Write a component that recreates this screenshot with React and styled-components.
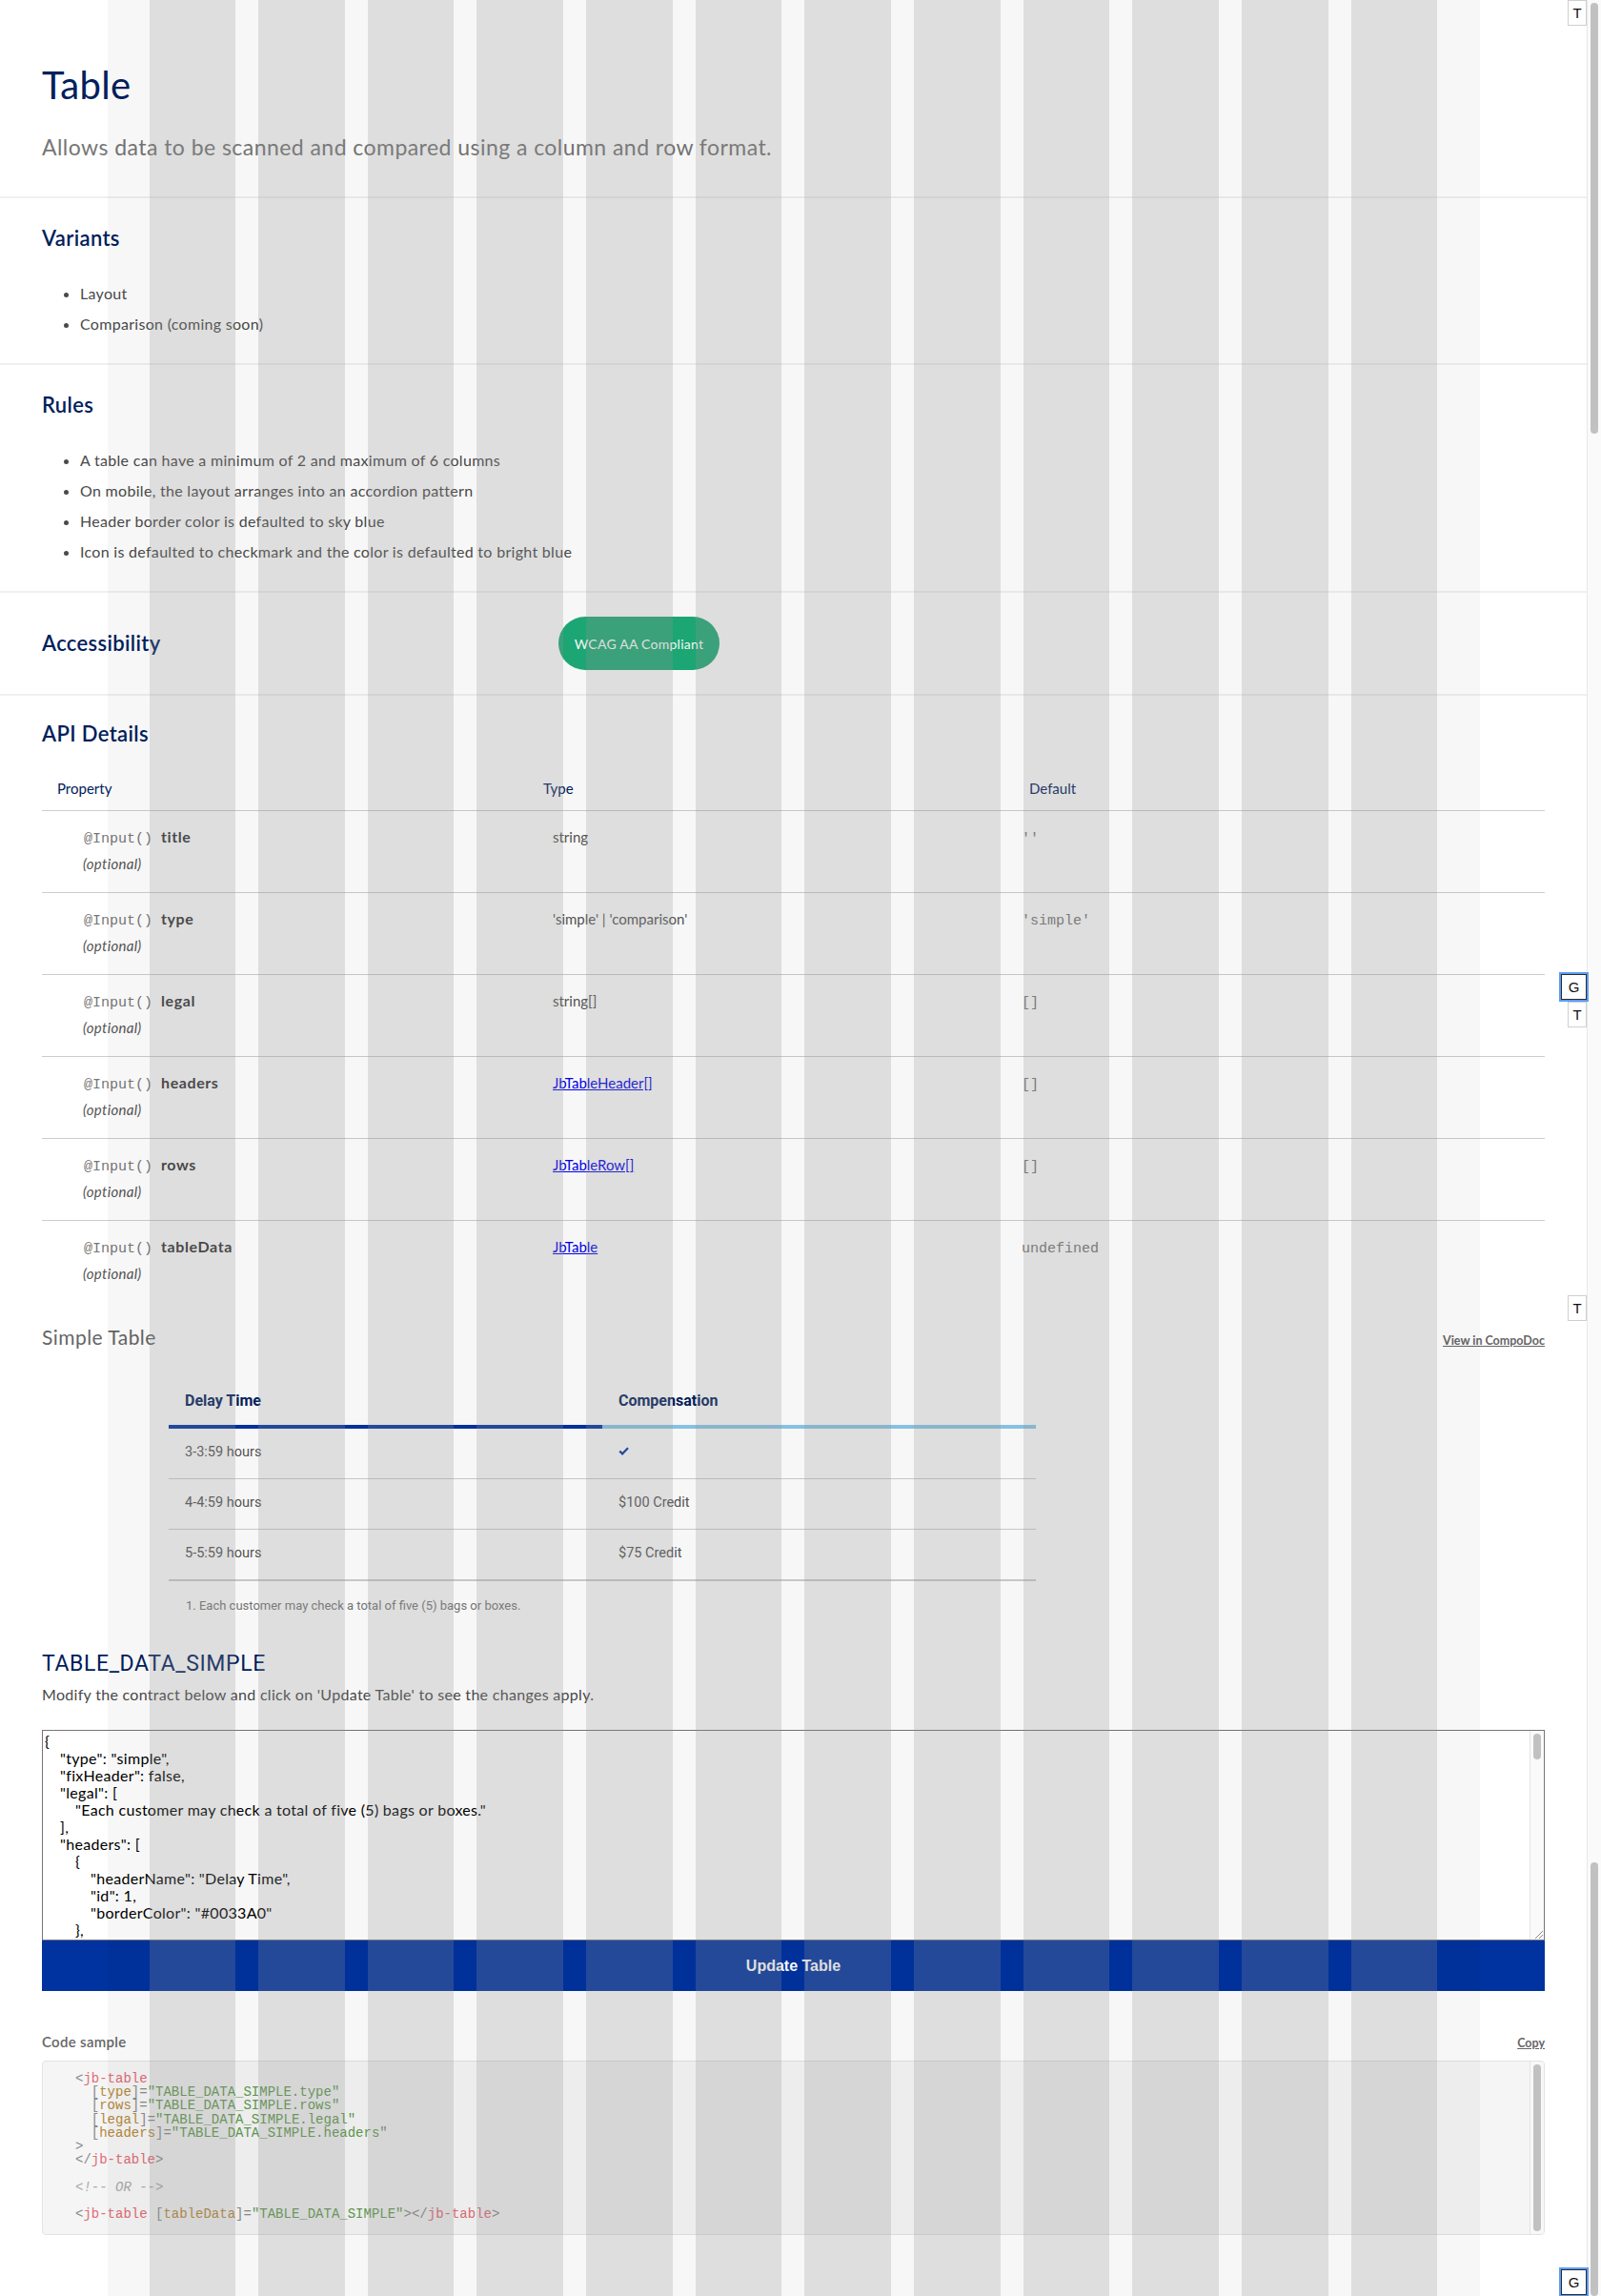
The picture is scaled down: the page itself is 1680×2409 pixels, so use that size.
import React from 'react';
import styled, { createGlobalStyle } from 'styled-components';

const NAVY = '#00205b';
const BLUE = '#0033a0';
const SKY = '#8bc8ea';
const SANS = 'Lato, "Open Sans", sans-serif';
const DIN = 'Roboto, "Liberation Sans", sans-serif';
const MONO = '"Liberation Mono", "DejaVu Sans Mono", monospace';

const GlobalStyle = createGlobalStyle`
  html, body {
    margin: 0;
    padding: 0;
    background: #ffffff;
  }
  body {
    font-family: ${SANS};
    color: #4a4a4a;
  }
  * {
    box-sizing: border-box;
  }
`;

// page frame: content + the browser-like scrollbar strip
const Shell = styled.div`
  position: relative;
  display: flex;
  min-height: 2409px;
`;

const Main = styled.main`
  position: relative;
  flex: 1;
  min-width: 0;
`;

const PageBar = styled.aside`
  position: relative;
  flex: 0 0 15px;
  background: #fafafa;
  border-left: 1px solid #e8e8e8;
`;

const PageThumb = styled.div`
  position: absolute;
  left: 3px;
  width: 8px;
  top: ${(p) => p.$top}px;
  height: ${(p) => p.$h}px;
  border-radius: 4px;
  background: #c1c1c1;
`;

const ToolTab = styled.div`
  position: absolute;
  top: ${(p) => p.$top}px;
  left: ${(p) => (p.$grid ? 1638 : 1645)}px;
  width: ${(p) => (p.$grid ? 27 : 20)}px;
  height: 27px;
  display: flex;
  align-items: center;
  justify-content: center;
  background: #ffffff;
  border: 1px solid ${(p) => (p.$grid ? '#2b2b2b' : '#cfcfcf')};
  outline: ${(p) => (p.$grid ? '2px solid #5c9cf2' : 'none')};
  font: 15px "Liberation Sans", Arial, sans-serif;
  color: #111;
  z-index: 10;
`;

// design grid overlay (12 columns)
const GridOverlay = styled.div`
  position: absolute;
  inset: 0;
  display: flex;
  justify-content: center;
  pointer-events: none;
  z-index: 5;
`;

const GridFrame = styled.div`
  width: 1440px;
  height: 100%;
  padding: 0 44px;
  display: grid;
  grid-template-columns: repeat(12, 1fr);
  column-gap: 24px;
  background: rgba(0, 0, 0, 0.03);
`;

const GridCol = styled.div`
  background: rgba(147, 147, 147, 0.25);
`;

const Section = styled.section`
  padding: ${(p) => p.$pad || '26px 44px 25px'};
  border-bottom: ${(p) => (p.$open ? 'none' : '2px solid #f0f0f0')};
`;

const Title = styled.h1`
  margin: 0;
  font-size: 40px;
  line-height: 48px;
  font-weight: 400;
  letter-spacing: 0.3px;
  color: ${NAVY};
`;

const Lead = styled.p`
  margin: 25px 0 0;
  font-size: 23px;
  line-height: 32px;
  letter-spacing: 0.45px;
  color: #767676;
`;

const SectionTitle = styled.h2`
  margin: 0;
  font-size: 22px;
  line-height: 32px;
  font-weight: 600;
  letter-spacing: 0.35px;
  color: ${NAVY};
`;

const Bullets = styled.ul`
  margin: 26px 0 0;
  padding-left: 40px;

  li {
    font-size: 16px;
    line-height: 32px;
    letter-spacing: 0.3px;
    color: #4a4a4a;
  }
`;

const SplitRow = styled.div`
  display: flex;
  align-items: center;

  ${SectionTitle} {
    flex: 0 0 542px;
  }
`;

const Pill = styled.span`
  display: inline-flex;
  align-items: center;
  justify-content: center;
  width: 169px;
  height: 56px;
  border-radius: 28px;
  background: #1dac77;
  color: #ffffff;
  font-size: 14px;
  letter-spacing: 0.25px;
`;

const ApiTable = styled.div`
  margin-top: 20px;
`;

const ApiRow = styled.div`
  display: grid;
  grid-template-columns: 526px 504px 1fr;
  height: ${(p) => (p.$head ? 45 : p.$last ? 85 : 86)}px;
  padding-top: ${(p) => (p.$head ? 11 : 17)}px;
  border-bottom: ${(p) => (p.$last ? 'none' : '1px solid #cdcdcd')};
`;

const HeadCell = styled.div`
  padding-left: ${(p) => p.$indent}px;
  font-size: 15px;
  line-height: 20px;
  color: ${NAVY};
`;

const Cell = styled.div`
  padding-left: ${(p) => p.$indent}px;
  font-size: 15px;
  line-height: 20px;
  color: #555;
`;

const CellLine = styled.div`
  height: 20px;
  line-height: 20px;
  white-space: nowrap;
`;

const Decorator = styled.span`
  font-family: ${MONO};
  font-size: 15px;
  line-height: 1;
  color: #777;
  margin-right: 9px;
`;

const PropName = styled.span`
  font-size: 16px;
  font-weight: 700;
  letter-spacing: 0.6px;
  color: #333;
`;

const Optional = styled.div`
  margin-top: 8px;
  margin-left: -1px;
  font-size: 15px;
  line-height: 20px;
  letter-spacing: 0.3px;
  font-style: italic;
  color: #555;
`;

const TypeLink = styled.a`
  color: #0000ee;
  text-decoration: underline;
`;

const MonoValue = styled.span`
  margin-left: -2px;
  font-family: ${MONO};
  font-size: 15px;
  line-height: 1;
  color: #777;
`;

const DemoHead = styled.div`
  display: flex;
  justify-content: space-between;
  align-items: baseline;
  margin-top: 23px;
`;

const DemoTitle = styled.h3`
  margin: 0;
  font-size: 21px;
  line-height: 28px;
  font-weight: 400;
  letter-spacing: 0.45px;
  color: #666;
`;

const SmallLink = styled.a`
  font-size: 12.5px;
  font-weight: 700;
  color: #666;
  text-decoration: underline;
`;

const DemoWrap = styled.div`
  margin: 27px 0 0 133px;
  width: 910px;
`;

const SimpleTable = styled.table`
  width: 100%;
  border-collapse: collapse;
  table-layout: fixed;
  font-family: ${DIN};

  th {
    padding: 16px 17px 15px;
    text-align: left;
    font-size: 16px;
    line-height: 20px;
    font-weight: 700;
    color: ${NAVY};
  }

  td {
    padding: 15px 17px 17px;
    font-size: 14.5px;
    line-height: 20px;
    color: #555;
    border-bottom: 1px solid #cdcdcd;
  }

  tr:last-child td {
    border-bottom-width: 2px;
  }
`;

const HeadTh = styled.th`
  border-bottom: 4px solid ${(p) => p.$color};
`;

const Footnote = styled.p`
  margin: 18px 0 0;
  padding-left: 18px;
  font-family: ${DIN};
  font-size: 13px;
  line-height: 16px;
  color: #777;
`;

const ContractTitle = styled.h3`
  margin: 38px 0 0;
  font-family: ${DIN};
  font-size: 23px;
  line-height: 30px;
  font-weight: 400;
  letter-spacing: 0.6px;
  color: ${NAVY};
`;

const Hint = styled.p`
  margin: 6px 0 0;
  font-size: 16px;
  line-height: 22px;
  letter-spacing: 0.3px;
  color: #4a4a4a;
`;

// boxes that carry a drawn scrollbar on their right edge
const ScrollFrame = styled.div`
  position: relative;
  margin-top: ${(p) => p.$gap}px;
`;

const ScrollTrack = styled.div`
  position: absolute;
  top: 1px;
  bottom: 1px;
  right: 1px;
  width: 15px;
  display: flex;
  flex-direction: column;
  background: ${(p) => p.$bg};
  border-left: 1px solid #e4e4e4;
  border-radius: ${(p) => (p.$round ? '0 3px 3px 0' : '0')};
  pointer-events: none;
`;

const ScrollThumb = styled.div`
  margin: 3px 3px 0 3px;
  height: ${(p) => p.$h}px;
  border-radius: 4px;
  background: #c1c1c1;
`;

const Grip = styled.svg`
  margin-top: auto;
  align-self: flex-end;
`;

const Contract = styled.textarea`
  display: block;
  width: 100%;
  height: 221px;
  margin: 0;
  padding: 2px 18px 2px 2px;
  border: 1px solid #767676;
  border-radius: 0;
  font-family: ${SANS};
  font-size: 16px;
  line-height: 18px;
  letter-spacing: 0.3px;
  color: #000;
  tab-size: 16px;
  white-space: pre;
  overflow: hidden;
  resize: none;
`;

const UpdateButton = styled.button`
  display: block;
  width: 100%;
  height: 53px;
  border: none;
  background: ${BLUE};
  color: #ffffff;
  font-family: "Liberation Sans", Arial, sans-serif;
  font-size: 16px;
  font-weight: 700;
`;

const CodeHead = styled.div`
  display: flex;
  justify-content: space-between;
  align-items: baseline;
  margin-top: 43px;
`;

const CodeLabel = styled.span`
  font-size: 15px;
  line-height: 20px;
  font-weight: 600;
  letter-spacing: 0.3px;
  color: #666;
`;

const CodeBox = styled.pre`
  margin: 0;
  height: 183px;
  overflow: hidden;
  padding: 11px 0 20px 34px;
  background: #f5f5f5;
  border: 1px solid #e3e3e3;
  border-radius: 4px;
  font-family: ${MONO};
  font-size: 14px;
  line-height: 14.2px;
  color: #8a8a8a;
`;

const Tok = styled.span`
  color: ${(p) =>
    ({ tag: '#e06c75', attr: '#b5893a', str: '#5f9a4f', cmt: '#aaaaaa' }[p.$k] || '#8a8a8a')};
  font-style: ${(p) => (p.$k === 'cmt' ? 'italic' : 'normal')};
`;

const CheckIcon = () => (
  <svg width="11" height="10" viewBox="0 0 11 10" aria-hidden="true">
    <path d="M0.4 5.3 L2.1 3.7 L4.1 5.7 L9.2 0.5 L10.8 2.1 L4.1 8.9 Z" fill={BLUE} />
  </svg>
);

const TABLE_DATA_SIMPLE = {
  type: 'simple',
  fixHeader: false,
  legal: ['Each customer may check a total of five (5) bags or boxes.'],
  headers: [
    { headerName: 'Delay Time', id: 1, borderColor: '#0033A0' },
    { headerName: 'Compensation', id: 2, borderColor: '#8BC8EA' },
  ],
  rows: [
    {
      id: 1,
      cells: [
        { headerId: 1, content: '3-3:59 hours' },
        { headerId: 2, content: '', icon: { name: 'checkmark', color: '#0033A0', size: 'small' } },
      ],
    },
    {
      id: 2,
      cells: [
        { headerId: 1, content: '4-4:59 hours' },
        { headerId: 2, content: '$100 Credit', icon: null },
      ],
    },
    {
      id: 3,
      cells: [
        { headerId: 1, content: '5-5:59 hours' },
        { headerId: 2, content: '$75 Credit', icon: null },
      ],
    },
  ],
};

const apiRows = [
  { name: 'title', type: 'string', def: "''" },
  { name: 'type', type: "'simple' | 'comparison'", def: "'simple'" },
  { name: 'legal', type: 'string[]', def: '[]' },
  { name: 'headers', type: 'JbTableHeader[]', link: true, def: '[]' },
  { name: 'rows', type: 'JbTableRow[]', link: true, def: '[]' },
  { name: 'tableData', type: 'JbTable', link: true, def: 'undefined' },
];

const demoRows = [
  { delay: '3-3:59 hours', check: true },
  { delay: '4-4:59 hours', comp: '$100 Credit' },
  { delay: '5-5:59 hours', comp: '$75 Credit' },
];

const Attr = ({ name, value }) => (
  <>
    {'  ['}
    <Tok $k="attr">{name}</Tok>
    {']='}
    <Tok $k="str">"{value}"</Tok>
    {'\n'}
  </>
);

const App = () => {
  return (
    <>
      <GlobalStyle />
      <Shell>
        <Main>
          <Section $pad="65px 44px 36px">
            <Title>Table</Title>
            <Lead>Allows data to be scanned and compared using a column and row format.</Lead>
          </Section>

          <Section>
            <SectionTitle>Variants</SectionTitle>
            <Bullets>
              <li>Layout</li>
              <li>Comparison (coming soon)</li>
            </Bullets>
          </Section>

          <Section>
            <SectionTitle>Rules</SectionTitle>
            <Bullets>
              <li>A table can have a minimum of 2 and maximum of 6 columns</li>
              <li>On mobile, the layout arranges into an accordion pattern</li>
              <li>Header border color is defaulted to sky blue</li>
              <li>Icon is defaulted to checkmark and the color is defaulted to bright blue</li>
            </Bullets>
          </Section>

          <Section $pad="25px 44px">
            <SplitRow>
              <SectionTitle>Accessibility</SectionTitle>
              <Pill>WCAG AA Compliant</Pill>
            </SplitRow>
          </Section>

          <Section $pad="24px 44px 60px" $open>
            <SectionTitle>API Details</SectionTitle>
            <ApiTable>
              <ApiRow $head>
                <HeadCell $indent={16}>Property</HeadCell>
                <HeadCell $indent={0}>Type</HeadCell>
                <HeadCell $indent={6}>Default</HeadCell>
              </ApiRow>
              {apiRows.map((r, i) => (
                <ApiRow key={r.name} $last={i === apiRows.length - 1}>
                  <Cell $indent={44}>
                    <CellLine>
                      <Decorator>@Input()</Decorator>
                      <PropName>{r.name}</PropName>
                    </CellLine>
                    <Optional>(optional)</Optional>
                  </Cell>
                  <Cell $indent={10}>
                    <CellLine>{r.link ? <TypeLink href="#">{r.type}</TypeLink> : r.type}</CellLine>
                  </Cell>
                  <Cell $indent={0}>
                    <CellLine>
                      <MonoValue>{r.def}</MonoValue>
                    </CellLine>
                  </Cell>
                </ApiRow>
              ))}
            </ApiTable>

            <DemoHead>
              <DemoTitle>Simple Table</DemoTitle>
              <SmallLink href="#">View in CompoDoc</SmallLink>
            </DemoHead>

            <DemoWrap>
              <SimpleTable>
                <thead>
                  <tr>
                    <HeadTh $color={BLUE}>Delay Time</HeadTh>
                    <HeadTh $color={SKY}>Compensation</HeadTh>
                  </tr>
                </thead>
                <tbody>
                  {demoRows.map((r) => (
                    <tr key={r.delay}>
                      <td>{r.delay}</td>
                      <td>{r.check ? <CheckIcon /> : r.comp}</td>
                    </tr>
                  ))}
                </tbody>
              </SimpleTable>
              <Footnote>1. Each customer may check a total of five (5) bags or boxes.</Footnote>
            </DemoWrap>

            <ContractTitle>TABLE_DATA_SIMPLE</ContractTitle>
            <Hint>Modify the contract below and click on 'Update Table' to see the changes apply.</Hint>
            <ScrollFrame $gap={26}>
              <Contract
                spellCheck={false}
                defaultValue={JSON.stringify(TABLE_DATA_SIMPLE, null, '\t')}
              />
              <ScrollTrack $bg="#fafafa">
                <ScrollThumb $h={27} />
                <Grip width="14" height="14" viewBox="0 0 14 14" aria-hidden="true">
                  <path d="M5 13 L13 5 M9 13 L13 9" stroke="#8a8a8a" strokeWidth="1" fill="none" />
                </Grip>
              </ScrollTrack>
            </ScrollFrame>
            <UpdateButton type="button">Update Table</UpdateButton>

            <CodeHead>
              <CodeLabel>Code sample</CodeLabel>
              <SmallLink href="#">Copy</SmallLink>
            </CodeHead>
            <ScrollFrame $gap={10}>
              <CodeBox>
                {'<'}
                <Tok $k="tag">jb-table</Tok>
                {'\n'}
                <Attr name="type" value="TABLE_DATA_SIMPLE.type" />
                <Attr name="rows" value="TABLE_DATA_SIMPLE.rows" />
                <Attr name="legal" value="TABLE_DATA_SIMPLE.legal" />
                <Attr name="headers" value="TABLE_DATA_SIMPLE.headers" />
                {'>\n</'}
                <Tok $k="tag">jb-table</Tok>
                {'>\n\n'}
                <Tok $k="cmt">{'<!-- OR -->'}</Tok>
                {'\n\n<'}
                <Tok $k="tag">jb-table</Tok>{' ['}
                <Tok $k="attr">tableData</Tok>
                {']='}
                <Tok $k="str">"TABLE_DATA_SIMPLE"</Tok>
                {'></'}
                <Tok $k="tag">jb-table</Tok>
                {'>'}
              </CodeBox>
              <ScrollTrack $bg="#f8f8f8" $round>
                <ScrollThumb $h={175} />
              </ScrollTrack>
            </ScrollFrame>
          </Section>

          <GridOverlay>
            <GridFrame>
              {Array.from({ length: 12 }, (_, i) => (
                <GridCol key={i} />
              ))}
            </GridFrame>
          </GridOverlay>
        </Main>

        <PageBar>
          <PageThumb $top={3} $h={452} />
          <PageThumb $top={1954} $h={455} />
        </PageBar>

        <ToolTab $top={0}>T</ToolTab>
        <ToolTab $top={1022} $grid>G</ToolTab>
        <ToolTab $top={1051}>T</ToolTab>
        <ToolTab $top={1359}>T</ToolTab>
        <ToolTab $top={2381} $grid>G</ToolTab>
      </Shell>
    </>
  );
};

export default App;
